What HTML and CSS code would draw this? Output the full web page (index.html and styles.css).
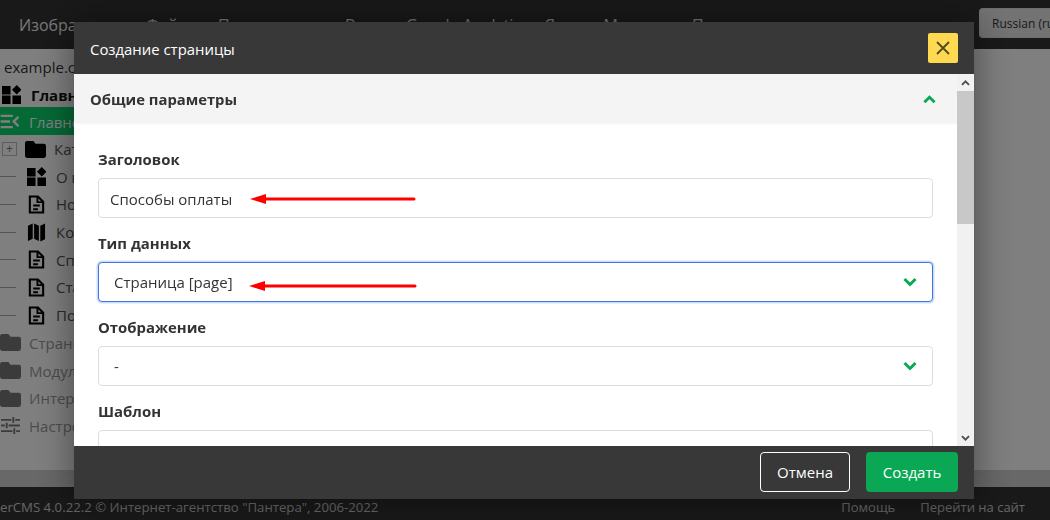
FILE: index.html
```html
<!DOCTYPE html>
<html lang="en">

<head>
    <meta charset="UTF-8">
    <title>Создание страницы</title>
    <link rel="stylesheet" href="styles.css">
</head>

<body>
    <svg class="icon-defs" width="0" height="0">
        <symbol id="i-dash" viewBox="0 0 20 20">
            <path d="M0 1h9v9H0zM0 11h9v9H0zM11 11h9v9h-9zM15.5 0l5 5-5 5-5-5z" />
        </symbol>
        <symbol id="i-doc" viewBox="0 0 18 20">
            <path fill="none" stroke="currentColor" stroke-width="2.2" d="M2 1.5h8.5L16 7v11.5H2z" />
            <path fill="none" stroke="currentColor" stroke-width="2" d="M10 2v5.5h6M5.5 11h7M5.5 15h5" />
        </symbol>
        <symbol id="i-folder" viewBox="0 0 20 16">
            <path d="M2 0h6l2 2.500h8q2 0 2 2V14q0 2-2 2H2q-2 0-2-2V2q0-2 2-2z" />
        </symbol>
        <symbol id="i-map" viewBox="0 0 18 20">
            <path d="M0 3l5-2.500v16L0 19zM6.500.5l5 2.500v16l-5-2.500zM13 3l5-2.500V17l-5 2.500z" />
        </symbol>
        <symbol id="i-menu" viewBox="0 0 20 16">
            <path fill="none" stroke="currentColor" stroke-width="2.600" d="M0 2h13M0 8h10M0 14h13M19 3l-5 5 5 5" />
        </symbol>
        <symbol id="i-sliders" viewBox="0 0 20 18">
            <path fill="none" stroke="currentColor" stroke-width="2" d="M0 3h11M15 3h5M13 0v6M0 9h4M8 9h12M6 6v6M0 15h12M16 15h4M14 12v6" />
        </symbol>
        <symbol id="i-chevron" viewBox="0 0 14 9">
            <path fill="none" stroke="currentColor" stroke-width="3" d="M1.500 1.500L7 7l5.500-5.500" />
        </symbol>
    </svg>

    <div class="page">
        <header class="topbar">
            <nav class="topnav">
                <a class="nav-w1">Изображения</a>
                <a class="nav-w2">Файлы</a>
                <a class="nav-w3">Пользователи</a>
                <a class="nav-w4">Виды</a>
                <a class="nav-w5">Google Analytics</a>
                <a class="nav-w6">Яндекс Метрика</a>
                <a>Плагины</a>
            </nav>
            <button type="button" class="lang">Russian (ru</button>
        </header>

        <main class="content">
            <aside class="sidebar">
                <div class="site">example.com</div>
                <div class="row row-home"><svg class="ic"><use href="#i-dash" /></svg><b>Главная</b></div>
                <div class="row row-active"><svg class="ic ic-menu"><use href="#i-menu" /></svg>Главное</div>
                <div class="row row-tree"><span class="plus">+</span><svg class="ic ic-folder"><use href="#i-folder" /></svg>Каталог</div>
                <div class="row row-leaf"><span class="dash"></span><svg class="ic"><use href="#i-dash" /></svg>О нас</div>
                <div class="row row-leaf"><span class="dash"></span><svg class="ic"><use href="#i-doc" /></svg>Новости</div>
                <div class="row row-leaf"><span class="dash"></span><svg class="ic"><use href="#i-map" /></svg>Контакты</div>
                <div class="row row-leaf"><span class="dash"></span><svg class="ic"><use href="#i-doc" /></svg>Способы</div>
                <div class="row row-leaf"><span class="dash"></span><svg class="ic"><use href="#i-doc" /></svg>Статьи</div>
                <div class="row row-leaf"><span class="dash"></span><svg class="ic"><use href="#i-doc" /></svg>Политика</div>
                <div class="row row-root"><svg class="ic ic-folder"><use href="#i-folder" /></svg>Страницы</div>
                <div class="row row-root"><svg class="ic ic-folder"><use href="#i-folder" /></svg>Модули</div>
                <div class="row row-root"><svg class="ic ic-folder"><use href="#i-folder" /></svg>Интерфейс</div>
                <div class="row row-root"><svg class="ic ic-folder"><use href="#i-sliders" /></svg>Настройки</div>
            </aside>
        </main>

        <footer class="pagefoot">
            <span class="foot-copy">erCMS 4.0.22.2 © Интернет-агентство "Пантера", 2006-2022</span>
            <span class="foot-links"><a>Помощь</a><a>Перейти на сайт</a></span>
        </footer>
    </div>

    <div class="backdrop"></div>

    <div class="modal">
        <div class="modal-head">
            <span class="modal-title">Создание страницы</span>
            <button type="button" class="close">
                <svg width="16" height="16" viewBox="0 0 16 16"><path fill="none" stroke="currentColor" stroke-width="1.800" d="M2 2l12 12M14 2L2 14" /></svg>
            </button>
        </div>

        <div class="modal-mid">
            <div class="modal-body">
                <div class="section-head">
                    <span>Общие параметры</span>
                    <svg class="chev chev-up"><use href="#i-chevron" /></svg>
                </div>
                <div class="fields">
                    <div class="field">
                        <label>Заголовок</label>
                        <div class="input">Способы оплаты</div>
                        <svg class="arrow arrow-1" width="166" height="10" viewBox="0 0 166 10"><path fill="#f00" d="M0 5l16-5v3.500h148a1.500 1.500 0 0 1 0 3H16V10z" /></svg>
                    </div>
                    <div class="field">
                        <label>Тип данных</label>
                        <div class="input select focus">Страница [page]<svg class="chev"><use href="#i-chevron" /></svg></div>
                        <svg class="arrow arrow-2" width="168" height="10" viewBox="0 0 168 10"><path fill="#f00" d="M0 5l16-5v3.500h150a1.500 1.500 0 0 1 0 3H16V10z" /></svg>
                    </div>
                    <div class="field">
                        <label>Отображение</label>
                        <div class="input select">-<svg class="chev"><use href="#i-chevron" /></svg></div>
                    </div>
                    <div class="field">
                        <label>Шаблон</label>
                        <div class="input select"><span></span><svg class="chev"><use href="#i-chevron" /></svg></div>
                    </div>
                </div>
            </div>
            <div class="scrollbar">
                <svg class="sb-arrow"><use href="#i-chevron" /></svg>
                <div class="sb-track"><div class="sb-thumb"></div></div>
                <svg class="sb-arrow sb-down"><use href="#i-chevron" /></svg>
            </div>
        </div>

        <div class="modal-foot">
            <button type="button" class="btn btn-cancel">Отмена</button>
            <button type="button" class="btn btn-ok">Создать</button>
        </div>
    </div>
</body>

</html>
```

FILE: styles.css
```css
* {
    box-sizing: border-box;
}

html, body {
    margin: 0;
    height: 520px;
    overflow: hidden;
}

body {
    font-family: "Open Sans", sans-serif;
    font-size: 15px;
    color: #333;
    background: #fff;
}

.icon-defs {
    display: block;
    height: 0;
}

.page {
    height: 520px;
    display: flex;
    flex-direction: column;
}

.topbar {
    height: 49px;
    background: #333;
    display: flex;
    justify-content: space-between;
    padding: 8px 0 0 19px;
    overflow: hidden;
}

.topnav {
    display: flex;
    font-size: 16px;
    line-height: 35px;
    color: #eee;
    white-space: nowrap;
}

.nav-w1 { width: 127px; }
.nav-w2 { width: 72px; }
.nav-w3 { width: 127px; }
.nav-w4 { width: 61px; }
.nav-w5 { width: 139px; }
.nav-w6 { width: 147px; }

.lang {
    width: 71px;
    height: 30px;
    padding: 0 0 0 12px;
    border: 1px solid #ddd;
    border-right: 0;
    border-radius: 4px 0 0 4px;
    background: #e6e6e6;
    font: 12px "Open Sans", sans-serif;
    color: #333;
    text-align: left;
    white-space: nowrap;
    overflow: hidden;
}

.content {
    flex: 1;
    border-bottom: 17px solid #d0d0d0;
    background: #fff;
}

.sidebar {
    width: 74px;
    padding-top: 7px;
    overflow: hidden;
}

.site {
    height: 24px;
    padding-left: 4px;
    line-height: 23px;
    color: #333;
    white-space: nowrap;
}

.row {
    height: 27.7px;
    display: flex;
    align-items: center;
    white-space: nowrap;
    color: #555;
}

.ic {
    width: 19px;
    height: 19px;
    fill: currentColor;
    color: #000;
    flex: none;
    margin-right: 8px;
}

.row-home {
    padding: 2px 0 0 2px;
    margin-bottom: -1px;
    color: #111;
}

.row-home .ic {
    margin-right: 10px;
}

.row-active {
    height: 28.500px;
    padding-top: 2px;
    background: #0bd26d;
    color: #fff;
}

.row-active .ic {
    color: #fff;
    margin-right: 9px;
}

.ic-menu {
    width: 20px;
    height: 15px;
}

.plus {
    width: 15px;
    height: 14px;
    margin: 0 8px 0 2px;
    border: 1px solid #bbb;
    font-size: 12px;
    line-height: 11px;
    text-align: center;
    color: #777;
    flex: none;
}

.ic-folder {
    width: 21px;
    height: 17px;
}

.row-tree .ic {
    margin-right: 8px;
}

.dash {
    width: 16px;
    height: 1px;
    margin-right: 11px;
    background: #aaa;
    flex: none;
}

.row-leaf .ic {
    margin-right: 10px;
}

.row-root {
    color: #999;
}

.row-root .ic {
    color: #777;
    margin-right: 8px;
}

.pagefoot {
    height: 33px;
    background: #333;
    color: #ccc;
    font-size: 13px;
    display: flex;
    justify-content: space-between;
    align-items: center;
    padding: 6px 25px 0 0;
    white-space: nowrap;
}

.foot-copy {
    font-size: 13.200px;
}

.foot-links {
    display: flex;
    gap: 25px;
}

.backdrop {
    position: fixed;
    inset: 0;
    background: rgba(0, 0, 0, 0.5);
}

.modal {
    position: fixed;
    left: 74px;
    top: 22px;
    width: 900px;
    height: 477px;
    display: flex;
    flex-direction: column;
    background: #fff;
    box-shadow: 0 0 35px rgba(0, 0, 0, 0.45);
}

.modal-head {
    height: 52px;
    flex: none;
    background: #383838;
    color: #fff;
    display: flex;
    justify-content: space-between;
    align-items: center;
    padding: 0 16px;
}

.modal-title {
    font-size: 14.900px;
    padding-top: 1px;
}

.close {
    width: 30px;
    height: 30px;
    border: 0;
    padding: 0;
    border-radius: 2px;
    background: #ffd950;
    color: #4d4a26;
    display: flex;
    align-items: center;
    justify-content: center;
}

.modal-mid {
    flex: 1;
    min-height: 0;
    display: flex;
}

.modal-body {
    flex: 1;
    min-width: 0;
    overflow: hidden;
}

.section-head {
    height: 48px;
    background: #f4f4f4;
    box-shadow: 0 1px 3px rgba(0, 0, 0, 0.08);
    display: flex;
    justify-content: space-between;
    align-items: center;
    padding: 2px 21px 0 16px;
    font-size: 14.800px;
    font-weight: 700;
    color: #333;
}

.chev {
    width: 14px;
    height: 10px;
    color: #0aa854;
}

.chev-up {
    width: 13px;
    height: 9px;
    transform: rotate(180deg);
}

.fields {
    padding: 26px 24px 0;
}

.field {
    position: relative;
    height: 84px;
}

label {
    display: block;
    height: 30px;
    font-size: 14.900px;
    font-weight: 700;
    line-height: 22px;
    color: #333;
}

.input {
    height: 40px;
    border: 1px solid #ddd;
    border-radius: 4px;
    padding: 0 11px;
    line-height: 40px;
    color: #333;
    background: #fff;
}

.select {
    display: flex;
    justify-content: space-between;
    align-items: center;
    padding: 0 15px;
}

.focus {
    border-color: #3b76e1;
    box-shadow: 0 0 0 1.500px rgba(59, 118, 225, 0.25);
}

.arrow {
    position: absolute;
}

.arrow-1 {
    left: 152px;
    top: 46px;
}

.arrow-2 {
    left: 151px;
    top: 49px;
}

.scrollbar {
    width: 17px;
    flex: none;
    display: flex;
    flex-direction: column;
    background: #f1f1f1;
}

.sb-arrow {
    width: 9px;
    height: 6px;
    margin: 6px 4px 5px;
    flex: none;
    color: #505050;
    transform: rotate(180deg);
}

.sb-down {
    transform: none;
}

.sb-track {
    flex: 1;
}

.sb-thumb {
    height: 133px;
    background: #c8c8c8;
}

.modal-foot {
    height: 53px;
    flex: none;
    background: #383838;
    display: flex;
    justify-content: flex-end;
    gap: 16px;
    padding: 6px 16px 0 0;
}

.btn {
    height: 40px;
    border-radius: 4px;
    font: 15px "Open Sans", sans-serif;
    color: #fff;
}

.btn-cancel {
    width: 90px;
    border: 1px solid #fff;
    background: transparent;
}

.btn-ok {
    width: 92px;
    border: 0;
    background: #0aa854;
}
```
